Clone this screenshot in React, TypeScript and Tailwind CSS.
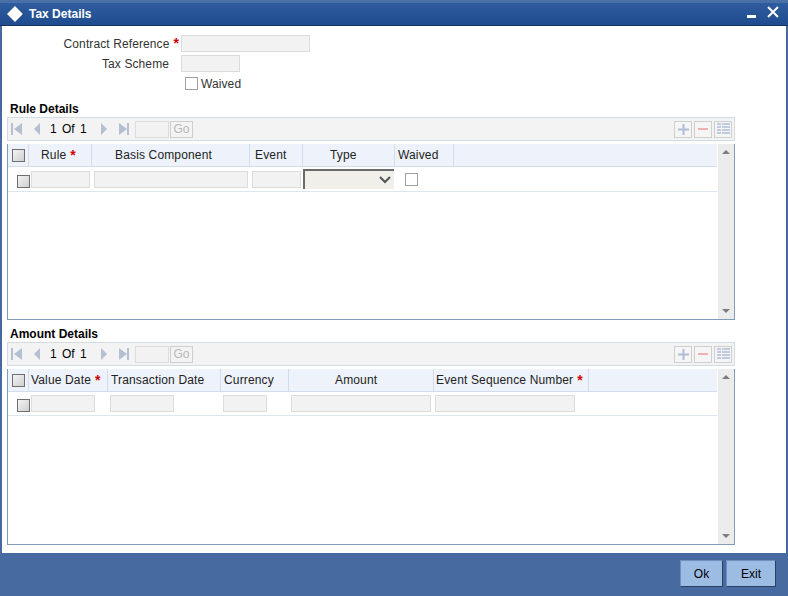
import type { ReactNode } from "react"

function Star() {
  return <span className="text-[#d40000] ml-[4px] font-bold text-[14px] leading-none">*</span>
}

function TextBox({ className }: { className: string }) {
  return <div className={`h-[17px] bg-[#f2f2f2] border border-[#dcdcdc] ${className}`} />
}

function CheckBox({ className = "" }: { className?: string }) {
  return <div className={`w-[13px] h-[13px] shrink-0 bg-white border border-[#a0a0a0] ${className}`} />
}

function GrayCheck({ className = "" }: { className?: string }) {
  return (
    <div
      className={`w-[13px] h-[13px] shrink-0 border border-[#6f6f6f] bg-gradient-to-br from-[#f4f4f4] to-[#cfcfcf] ${className}`}
    />
  )
}

function PagerIcon({ kind }: { kind: "first" | "prev" | "next" | "last" }) {
  const points = {
    first: "11,0 11,12 3,6",
    prev: "7,0 7,12 1,6",
    next: "1,0 1,12 7,6",
    last: "0,0 0,12 8,6",
  }[kind]
  return (
    <svg width="12" height="12" viewBox="0 0 12 12" className="shrink-0">
      <polygon points={points} fill="#b4c0d2" />
      {kind === "first" && <rect x="0" y="0" width="2" height="12" fill="#b4c0d2" />}
      {kind === "last" && <rect x="8" y="0" width="2" height="12" fill="#b4c0d2" />}
    </svg>
  )
}

function ToolButton({ children, className = "" }: { children: ReactNode; className?: string }) {
  return (
    <div className={`w-[18px] h-[17px] flex items-center justify-center border border-[#cfcfcf] bg-[#f5f5f5] ${className}`}>
      {children}
    </div>
  )
}

function Toolbar() {
  return (
    <div className="ml-[7px] w-[728px] h-[24px] flex items-center bg-[#f3f3f3] border border-[#d3dbe3] text-[12px] text-black">
      <div className="ml-[3px]"><PagerIcon kind="first" /></div>
      <div className="ml-[10px]"><PagerIcon kind="prev" /></div>
      <span className="ml-[5px] w-[38px] whitespace-nowrap [word-spacing:2px]">1 Of 1</span>
      <div className="ml-[12px]"><PagerIcon kind="next" /></div>
      <div className="ml-[7px]"><PagerIcon kind="last" /></div>
      <div className="ml-[4px] w-[34px] h-[17px] bg-[#f2f2f2] border border-[#dcdcdc]" />
      <div className="ml-[1px] w-[23px] h-[17px] flex items-center justify-center border border-[#cfcfcf] text-[#b8b8b8]">Go</div>
      <div className="ml-auto mr-[2px] flex gap-[2px]">
        <ToolButton>
          <svg width="13" height="13" viewBox="0 0 13 13">
            <rect x="5.5" y="1" width="2" height="11" fill="#b0bdd8" />
            <rect x="1" y="5.5" width="11" height="2" fill="#b0bdd8" />
          </svg>
        </ToolButton>
        <ToolButton>
          <div className="w-[10px] h-[2px] bg-[#eeb0b0]" />
        </ToolButton>
        <ToolButton>
          <svg width="13" height="12" viewBox="0 0 13 12">
            <path d="M0 1h13M0 4h13M0 7h13M0 10h13" stroke="#b0bdd8" strokeWidth="1.5" />
            <path d="M4.5 0v12" stroke="#f5f5f5" strokeWidth="1" />
          </svg>
        </ToolButton>
      </div>
    </div>
  )
}

function HeadCell({ width, children }: { width: string; children: ReactNode }) {
  return (
    <div className={`${width} shrink-0 h-full flex items-center whitespace-nowrap border-r border-[#d3dcec]`}>
      {children}
    </div>
  )
}

function Scrollbar() {
  return (
    <div className="w-[16px] h-full bg-[#ececec] flex flex-col items-center justify-between py-[6px]">
      <div className="w-0 h-0 border-x-[4px] border-x-transparent border-b-[4px] border-b-[#7d7d7d]" />
      <div className="w-0 h-0 border-x-[4px] border-x-transparent border-t-[4px] border-t-[#7d7d7d]" />
    </div>
  )
}

function TableFrame({ head, row, rowHeight }: { head: ReactNode; row: ReactNode; rowHeight: string }) {
  return (
    <div className="ml-[7px] mt-[3px] w-[728px] h-[176px] flex border-x border-b border-[#7f9db9]">
      <div className="w-[710px] h-full">
        <div className="h-[23px] flex items-center bg-[#eef2fb] border-b border-[#d3dcec] text-[12px] text-[#222] tracking-[0.15px]">
          {head}
        </div>
        <div className={`${rowHeight} flex items-center border-b border-[#dfe5ee]`}>{row}</div>
      </div>
      <div className="ml-[1px]">
        <Scrollbar />
      </div>
    </div>
  )
}

function SectionTitle({ children }: { children: ReactNode }) {
  return <div className="pl-[10px] h-[16px] flex items-center text-[12px] font-bold text-black">{children}</div>
}

export default function App() {
  return (
    <div className="w-[788px] h-[596px] overflow-hidden flex flex-col bg-[#476aa0] font-['Liberation_Sans',Arial,sans-serif]">
      {/* Title bar */}
      <div className="h-[26px] shrink-0 flex items-center bg-gradient-to-b from-[#2e5c9f] to-[#1f4c8e] border-t-[3px] border-t-[#4a70a8] border-b border-b-[#12335f] text-white">
        <svg width="18" height="18" viewBox="0 0 18 18" className="ml-[6px] shrink-0">
          <polygon points="10,2 18,9 10,16 3,9" fill="#0f2f5e" />
          <polygon points="9,1 17,9 9,17 1,9" fill="#ffffff" />
        </svg>
        <span className="ml-[5px] text-[12px] font-bold">Tax Details</span>
        <div className="ml-auto mr-[9px] flex items-start gap-[11px]">
          <div className="mt-[4px] w-[9px] h-[3px] bg-white" />
          <svg width="12" height="12" viewBox="0 0 12 12" className="-mt-[5px]">
            <path d="M1 1l10 10M11 1L1 11" stroke="#fff" strokeWidth="2" />
          </svg>
        </div>
      </div>

      {/* Body */}
      <div className="mx-[2px] h-[527px] shrink-0 bg-white">
        <div className="-ml-[2px] text-[12px] text-[#333]">
          <div className="pt-[9px] flex flex-col gap-[3px] tracking-[0.1px]">
            <div className="h-[17px] flex items-center">
              <div className="w-[179px] text-right whitespace-nowrap">
                Contract Reference<Star />
              </div>
              <TextBox className="ml-[2px] w-[129px]" />
            </div>
            <div className="h-[17px] flex items-center">
              <div className="w-[169px] text-right whitespace-nowrap">Tax Scheme</div>
              <TextBox className="ml-[12px] w-[59px]" />
            </div>
            <div className="h-[17px] flex items-center">
              <CheckBox className="ml-[185px]" />
              <span className="ml-[3px]">Waived</span>
            </div>
          </div>

          <div className="mt-[9px]">
            <SectionTitle>Rule Details</SectionTitle>
            <Toolbar />
            <TableFrame
              rowHeight="h-[25px]"
              head={
                <>
                  <HeadCell width="w-[21px]"><GrayCheck className="ml-[4px]" /></HeadCell>
                  <HeadCell width="w-[63px] pl-[12px]">Rule<Star /></HeadCell>
                  <HeadCell width="w-[158px] pl-[23px]">Basis Component</HeadCell>
                  <HeadCell width="w-[53px] pl-[5px]">Event</HeadCell>
                  <HeadCell width="w-[92px] pl-[27px]">Type</HeadCell>
                  <HeadCell width="w-[59px] pl-[3px]">Waived</HeadCell>
                </>
              }
              row={
                <>
                  <GrayCheck className="ml-[9px] mt-[4px]" />
                  <TextBox className="ml-[1px] w-[59px]" />
                  <TextBox className="ml-[4px] w-[154px]" />
                  <TextBox className="ml-[4px] w-[49px]" />
                  <div className="ml-[2px] w-[91px] h-[20px] flex items-center justify-end pr-[3px] bg-[#f0efea] border-t-2 border-l-2 border-[#6a6a6a]">
                    <svg width="12" height="8" viewBox="0 0 12 8">
                      <path d="M1 1l5 5 5-5" fill="none" stroke="#555" strokeWidth="2" />
                    </svg>
                  </div>
                  <CheckBox className="ml-[11px]" />
                </>
              }
            />
          </div>

          <div className="mt-[6px]">
            <SectionTitle>Amount Details</SectionTitle>
            <Toolbar />
            <TableFrame
              rowHeight="h-[24px]"
              head={
                <>
                  <HeadCell width="w-[21px]"><GrayCheck className="ml-[4px]" /></HeadCell>
                  <HeadCell width="w-[79px] pl-[2px]">Value Date<Star /></HeadCell>
                  <HeadCell width="w-[113px] pl-[3px]">Transaction Date</HeadCell>
                  <HeadCell width="w-[68px] pl-[3px]">Currency</HeadCell>
                  <HeadCell width="w-[145px] pl-[46px]">Amount</HeadCell>
                  <HeadCell width="w-[155px] pl-[2px]">Event Sequence Number<Star /></HeadCell>
                </>
              }
              row={
                <>
                  <GrayCheck className="ml-[9px] mt-[4px]" />
                  <TextBox className="ml-[1px] w-[64px]" />
                  <TextBox className="ml-[15px] w-[64px]" />
                  <TextBox className="ml-[49px] w-[44px]" />
                  <TextBox className="ml-[24px] w-[140px]" />
                  <TextBox className="ml-[4px] w-[140px]" />
                </>
              }
            />
          </div>
        </div>
      </div>

      {/* Footer */}
      <div className="flex-1 flex items-start justify-end gap-[3px] pt-[7px] pr-[12px]">
        <button className="w-[43px] h-[27px] bg-[#9dbce3] border border-[#6f8fbd] border-r-[#2b3f5f] border-b-[#2b3f5f] text-[12px] text-black">Ok</button>
        <button className="w-[50px] h-[27px] bg-[#9dbce3] border border-[#6f8fbd] border-r-[#2b3f5f] border-b-[#2b3f5f] text-[12px] text-black">Exit</button>
      </div>
    </div>
  )
}
